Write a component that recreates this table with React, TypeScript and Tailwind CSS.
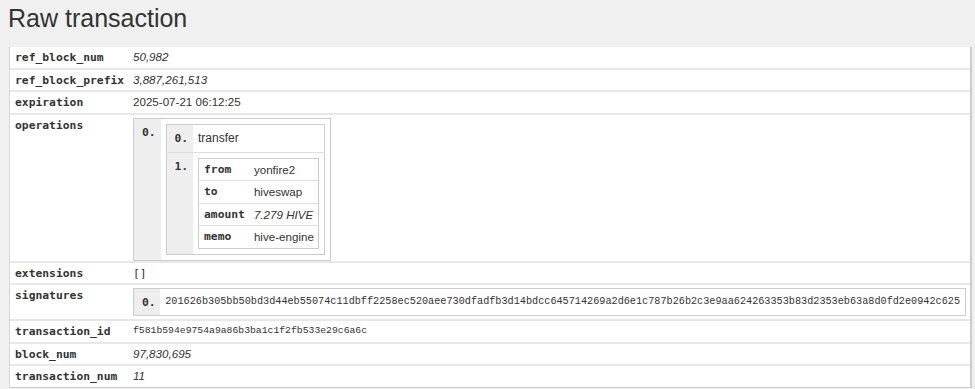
import React from "react";

const mono = "font-['DejaVu_Sans_Mono',monospace]";
const hash = "font-['Liberation_Mono',monospace]";

function IndexCell({ i }: { i: number }) {
  return (
    <td className={`w-[27px] bg-[#eeeeee] pl-[8px] pr-[4px] pt-[6px] align-top font-bold text-[11.33px] leading-[14px] ${mono}`}>
      {i}.
    </td>
  );
}

function KV({ rows }: { rows: [string, React.ReactNode][] }) {
  return (
    <table className="border-collapse border border-[#cccccc]">
      <tbody>
        {rows.map(([k, v], idx) => (
          <tr key={k} className={idx > 0 ? "border-t border-[#dddddd]" : ""}>
            <td className={`pl-[5px] pr-[4px] py-[4px] align-top font-bold text-[11.33px] leading-[13.5px] ${mono}`}>{k}</td>
            <td className="pl-[5px] pr-[4px] py-[4px] align-top text-[11.6px] leading-[13.5px] whitespace-nowrap">{v}</td>
          </tr>
        ))}
      </tbody>
    </table>
  );
}

function Row({ k, children, last, tight }: { k: string; children: React.ReactNode; last?: boolean; tight?: boolean }) {
  return (
    <tr className={last ? "" : "border-b-2 border-[#e8e8e8]"}>
      <td className={`w-[117px] pl-[5px] pr-[2px] py-[3px] align-top font-bold text-[11.33px] leading-[14.5px] whitespace-nowrap ${mono}`}>{k}</td>
      <td className={`pl-[6px] pr-[4px] align-top text-[11.6px] leading-[14.5px] ${tight ? "pt-[3px] pb-[0px]" : "py-[3px]"}`}>{children}</td>
    </tr>
  );
}

export default function App() {
  return (
    <div className="min-h-[389px] w-[975px] bg-[#f0f0f0] text-[#333333] font-['Liberation_Sans',Arial,sans-serif]">
      <h1 className="pl-[8px] pt-[3px] pb-[13px] text-[25px] leading-[31px] font-normal">Raw transaction</h1>
      <div className="ml-[9px] w-[963px] bg-white border-l border-[#d8d8d8] border-r-2 border-r-[#cccccc] border-b border-b-[#cccccc]">
        <table className="w-full border-collapse">
          <tbody>
            <Row k="ref_block_num"><i>50,982</i></Row>
            <Row k="ref_block_prefix"><i>3,887,261,513</i></Row>
            <Row k="expiration">2025-07-21 06:12:25</Row>
            <Row k="operations" tight>
              <table className="border-collapse border border-[#cccccc]">
                <tbody>
                  <tr>
                    <IndexCell i={0} />
                    <td className="p-[5px] align-top">
                      <table className="border-collapse border border-[#cccccc]">
                        <tbody>
                          <tr>
                            <IndexCell i={0} />
                            <td className="px-[5px] pt-[4px] pb-[5px] align-top text-[12px] leading-[18px]">transfer</td>
                          </tr>
                          <tr className="border-t border-[#dddddd]">
                            <IndexCell i={1} />
                            <td className="p-[5px] align-top">
                              <KV
                                rows={[
                                  ["from", "yonfire2"],
                                  ["to", "hiveswap"],
                                  ["amount", <i key="a">7.279 HIVE</i>],
                                  ["memo", "hive-engine"],
                                ]}
                              />
                            </td>
                          </tr>
                        </tbody>
                      </table>
                    </td>
                  </tr>
                </tbody>
              </table>
            </Row>
            <Row k="extensions"><div className={`${mono} text-[11.33px] leading-[14.5px]`}>[]</div></Row>
            <Row k="signatures">
              <table className="border-collapse border border-[#cccccc]">
                <tbody>
                  <tr>
                    <td className={`w-[27px] bg-[#eeeeee] pl-[8px] pr-[4px] align-middle font-bold text-[11.33px] leading-[14px] ${mono}`}>0.</td>
                    <td className={`px-[5px] py-[6px] text-[10.2px] leading-[14px] whitespace-nowrap ${hash}`}>
                      201626b305bb50bd3d44eb55074c11dbff2258ec520aee730dfadfb3d14bdcc645714269a2d6e1c787b26b2c3e9aa624263353b83d2353eb63a8d0fd2e0942c625
                    </td>
                  </tr>
                </tbody>
              </table>
            </Row>
            <Row k="transaction_id"><div className={`${hash} text-[9.75px] leading-[14.5px]`}>f581b594e9754a9a86b3ba1c1f2fb533e29c6a6c</div></Row>
            <Row k="block_num"><i>97,830,695</i></Row>
            <Row k="transaction_num" last><i>11</i></Row>
          </tbody>
        </table>
      </div>
    </div>
  );
}
